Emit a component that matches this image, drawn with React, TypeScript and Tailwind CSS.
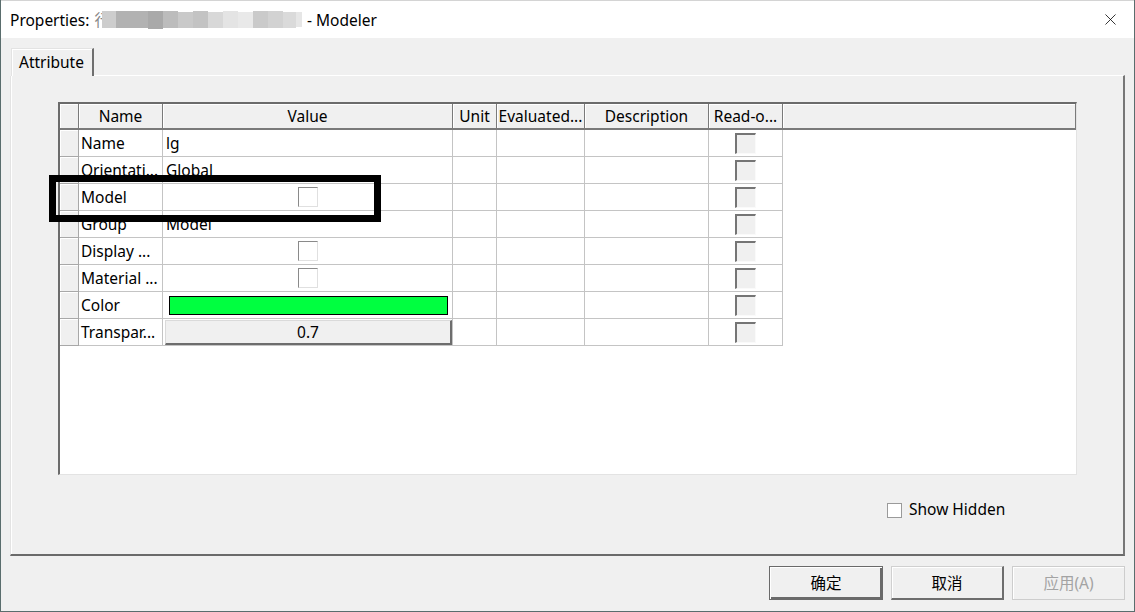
import { X } from "lucide-react";

const font = "font-['Noto_Sans','Noto_Sans_CJK_SC',sans-serif]";

type Row = {
  label: string;
  kind: "text" | "check" | "color" | "button";
  value?: string;
};

const rows: Row[] = [
  { label: "Name", kind: "text", value: "lg" },
  { label: "Orientati...", kind: "text", value: "Global" },
  { label: "Model", kind: "check" },
  { label: "Group", kind: "text", value: "Model" },
  { label: "Display ...", kind: "check" },
  { label: "Material ...", kind: "check" },
  { label: "Color", kind: "color" },
  { label: "Transpar...", kind: "button", value: "0.7" },
];

const headers = ["", "Name", "Value", "Unit", "Evaluated...", "Description", "Read-o...", ""];

// blurred part of the title
const blur = [
  { w: 14, c: "bg-[#cdcdcd]", h: "h-[17px]" },
  { w: 32, c: "bg-[#b2b2b2]", h: "h-[17px]" },
  { w: 15, c: "bg-[#a9a9a9]", h: "h-[18px]" },
  { w: 15, c: "bg-[#bcbcbc]", h: "h-[17px]" },
  { w: 15, c: "bg-[#c9c9c9]", h: "h-[16px]" },
  { w: 15, c: "bg-[#c3c3c3]", h: "h-[17px]" },
  { w: 15, c: "bg-[#d8d8d8]", h: "h-[16px]" },
  { w: 15, c: "bg-[#e4e4e4]", h: "h-[17px]" },
  { w: 15, c: "bg-[#e9e9e9]", h: "h-[16px]" },
  { w: 15, c: "bg-[#cacaca]", h: "h-[17px]" },
  { w: 15, c: "bg-[#d2d2d2]", h: "h-[17px]" },
  { w: 13, c: "bg-[#dadada]", h: "h-[16px]" },
  { w: 6, c: "bg-[#e6e6e6]", h: "h-[15px]" },
];

const cols = "grid grid-cols-[19px_84px_290px_44px_88px_124px_74px_1fr]";

export default function App() {
  return (
    <div className={`${font} relative flex h-[612px] w-[1135px] flex-col border-x border-b border-[#5a6d6d] bg-[#f0f0f0] text-[15.5px] leading-[20px] text-black`}>
      <div className="flex h-[38px] items-center justify-between border-t border-[#d4d4d4] bg-white pl-[9px] pr-[14px]">
        <div className="flex items-center">
          <span>Properties:</span>
          <span className="ml-[5px] text-[#888]">行</span>
          <div className="-ml-[8px] flex items-center blur-[0.6px]">
            {blur.map((b, i) => (
              <div key={i} className={`${b.c} ${b.h}`} style={{ width: b.w }} />
            ))}
          </div>
          <span className="ml-[5px]">- Modeler</span>
        </div>
        <X size={19} strokeWidth={1} />
      </div>

      <div className="flex flex-col pl-[10px] pr-[9px]">
        <div className="mt-[10px] flex h-[27px]">
          <div className="relative z-10 -mb-px flex h-[28px] w-[83px] items-center border-l border-t border-r-2 border-l-[#e3e3e3] border-t-[#e3e3e3] border-r-[#6f6f6f] bg-[#f0f0f0] pb-[2px] pl-[7px] shadow-[inset_1px_1px_0_#fff]">
            Attribute
          </div>
        </div>

        <div className="-ml-px flex h-[481px] flex-col border-l border-t border-r-2 border-b-2 border-l-[#e3e3e3] border-t-white border-r-[#777] border-b-[#6a6a6a] shadow-[inset_1px_0_0_#fff]">
          <div className="ml-[47px] mt-[26px] h-[373px] w-[1019px] border-l-2 border-t-2 border-r border-b border-l-[#6b6b6b] border-t-[#6b6b6b] border-r-[#e3e3e3] border-b-[#e3e3e3] bg-white">
            <div className={`${cols} h-[26px]`}>
              {headers.map((h, i) => (
                <div
                  key={i}
                  className="flex items-center justify-center overflow-hidden whitespace-nowrap border-r border-b-2 border-r-[#7a7a7a] border-b-[#7a7a7a] bg-[#f0f0f0] shadow-[inset_1px_1px_0_#fff]"
                >
                  {h}
                </div>
              ))}
            </div>
            {rows.map((r) => (
              <div key={r.label} className={`${cols} h-[27px]`}>
                <div className="border-r border-b border-[#a8a8a8] bg-[#f0f0f0] shadow-[inset_1px_1px_0_#fff]" />
                <div className="flex items-center whitespace-nowrap border-r border-b border-[#c4c4c4] pl-[2px]">
                  {r.label}
                </div>
                <div className="flex items-center border-r border-b border-[#c4c4c4]">
                  {r.kind === "text" && <span className="pl-[3px]">{r.value}</span>}
                  {r.kind === "check" && (
                    <div className="mx-auto h-[20px] w-[20px] border-l border-t border-r border-b border-l-[#8a8a8a] border-t-[#8a8a8a] border-r-[#e0e0e0] border-b-[#e0e0e0] bg-white" />
                  )}
                  {r.kind === "color" && (
                    <div className="ml-[6px] mr-[4px] h-[19px] flex-1 border border-black bg-[#00ff40]" />
                  )}
                  {r.kind === "button" && (
                    <div className="ml-[2px] mt-px flex h-[25px] flex-1 items-center justify-center self-start border-l border-t border-r-2 border-b-2 border-l-[#dadada] border-t-[#dadada] border-r-[#6d6d6d] border-b-[#6d6d6d] bg-[#f0f0f0] pb-[1px]">
                      {r.value}
                    </div>
                  )}
                </div>
                <div className="border-r border-b border-[#c4c4c4]" />
                <div className="border-r border-b border-[#c4c4c4]" />
                <div className="border-r border-b border-[#c4c4c4]" />
                <div className="flex items-center justify-center border-r border-b border-[#c4c4c4]">
                  <div className="h-[21px] w-[21px] border-l-2 border-t-2 border-r border-b border-l-[#757575] border-t-[#757575] border-r-[#fafafa] border-b-[#fafafa] bg-[#f0f0f0]" />
                </div>
                <div />
              </div>
            ))}
          </div>

          <div className="ml-[876px] mt-[24px] flex items-center">
            <div className="h-[15px] w-[15px] border border-[#9a9a9a] bg-white" />
            <span className="ml-[7px] pb-[2px]">Show Hidden</span>
          </div>
        </div>

        <div className="mt-[10px] flex justify-end gap-[8px]">
          <button className="flex h-[34px] w-[114px] items-center justify-center border border-[#6a6a6a] bg-[#f0f0f0] shadow-[inset_1px_1px_0_#fff,inset_-2px_-2px_0_#6a6a6a]">
            确定
          </button>
          <button className="flex h-[34px] w-[113px] items-center justify-center border-l border-t border-r-2 border-b-2 border-l-[#d0d0d0] border-t-[#d0d0d0] border-r-[#6d6d6d] border-b-[#6d6d6d] bg-[#f0f0f0] shadow-[inset_1px_1px_0_#fff]">
            取消
          </button>
          <button className="flex h-[34px] w-[113px] items-center justify-center border border-[#cdcdcd] bg-[#f0f0f0] text-[#a3a3a3] shadow-[inset_1px_1px_0_#fff]">
            应用(A)
          </button>
        </div>
      </div>

      <div className="pointer-events-none absolute left-[48px] top-[175px] h-[47px] w-[332px] border-[7px] border-black" />
    </div>
  );
}
